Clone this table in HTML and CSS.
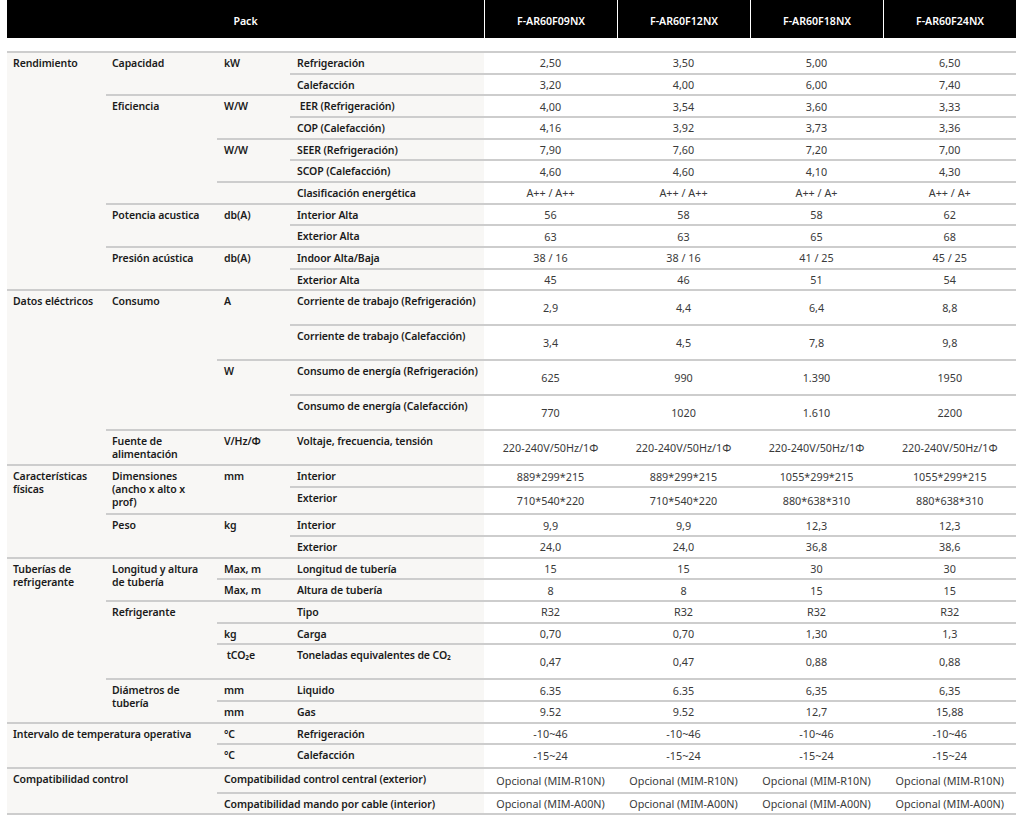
FILE: index.html
```html
<!DOCTYPE html>
<html lang="es">
<head>
<meta charset="utf-8">
<title>Especificaciones Pack</title>
<link rel="stylesheet" href="styles.css">
</head>
<body>
<div class="sheet">
  <table class="spec spec-head">
    <colgroup>
      <col class="c-g"><col class="c-s"><col class="c-u"><col class="c-l">
      <col class="c-d"><col class="c-d"><col class="c-d"><col class="c-d">
    </colgroup>
    <thead>
      <tr>
        <th colspan="4" class="pack">Pack</th>
        <th class="model">F-AR60F09NX</th>
        <th class="model">F-AR60F12NX</th>
        <th class="model">F-AR60F18NX</th>
        <th class="model">F-AR60F24NX</th>
      </tr>
    </thead>
  </table>

  <table class="spec spec-body">
    <colgroup>
      <col class="c-g"><col class="c-s"><col class="c-u"><col class="c-l">
      <col class="c-d"><col class="c-d"><col class="c-d"><col class="c-d">
    </colgroup>
    <tbody>
      <tr>
        <td class="g" rowspan="11">Rendimiento</td>
        <td class="s" rowspan="2">Capacidad</td>
        <td class="u" rowspan="2">kW</td>
        <td class="l">Refrigeración</td>
        <td class="d">2,50</td><td class="d">3,50</td><td class="d">5,00</td><td class="d">6,50</td>
      </tr>
      <tr>
        <td class="l">Calefacción</td>
        <td class="d">3,20</td><td class="d">4,00</td><td class="d">6,00</td><td class="d">7,40</td>
      </tr>
      <tr>
        <td class="s" rowspan="5">Eficiencia</td>
        <td class="u" rowspan="2">W/W</td>
        <td class="l">&nbsp;EER (Refrigeración)</td>
        <td class="d">4,00</td><td class="d">3,54</td><td class="d">3,60</td><td class="d">3,33</td>
      </tr>
      <tr>
        <td class="l">COP (Calefacción)</td>
        <td class="d">4,16</td><td class="d">3,92</td><td class="d">3,73</td><td class="d">3,36</td>
      </tr>
      <tr>
        <td class="u" rowspan="2">W/W</td>
        <td class="l">SEER (Refrigeración)</td>
        <td class="d">7,90</td><td class="d">7,60</td><td class="d">7,20</td><td class="d">7,00</td>
      </tr>
      <tr>
        <td class="l">SCOP (Calefacción)</td>
        <td class="d">4,60</td><td class="d">4,60</td><td class="d">4,10</td><td class="d">4,30</td>
      </tr>
      <tr>
        <td class="u"></td>
        <td class="l">Clasificación energética</td>
        <td class="d">A++ / A++</td><td class="d">A++ / A++</td><td class="d">A++ / A+</td><td class="d">A++ / A+</td>
      </tr>
      <tr>
        <td class="s" rowspan="2">Potencia acustica</td>
        <td class="u" rowspan="2">db(A)</td>
        <td class="l">Interior Alta</td>
        <td class="d">56</td><td class="d">58</td><td class="d">58</td><td class="d">62</td>
      </tr>
      <tr>
        <td class="l">Exterior Alta</td>
        <td class="d">63</td><td class="d">63</td><td class="d">65</td><td class="d">68</td>
      </tr>
      <tr>
        <td class="s" rowspan="2">Presión acústica</td>
        <td class="u" rowspan="2">db(A)</td>
        <td class="l">Indoor Alta/Baja</td>
        <td class="d">38 / 16</td><td class="d">38 / 16</td><td class="d">41 / 25</td><td class="d">45 / 25</td>
      </tr>
      <tr>
        <td class="l">Exterior Alta</td>
        <td class="d">45</td><td class="d">46</td><td class="d">51</td><td class="d">54</td>
      </tr>

      <tr class="tall">
        <td class="g" rowspan="5">Datos eléctricos</td>
        <td class="s" rowspan="4">Consumo</td>
        <td class="u" rowspan="2">A</td>
        <td class="l">Corriente de trabajo (Refrigeración)</td>
        <td class="d">2,9</td><td class="d">4,4</td><td class="d">6,4</td><td class="d">8,8</td>
      </tr>
      <tr class="tall">
        <td class="l">Corriente de trabajo (Calefacción)</td>
        <td class="d">3,4</td><td class="d">4,5</td><td class="d">7,8</td><td class="d">9,8</td>
      </tr>
      <tr class="tall">
        <td class="u" rowspan="2">W</td>
        <td class="l">Consumo de energía (Refrigeración)</td>
        <td class="d">625</td><td class="d">990</td><td class="d">1.390</td><td class="d">1950</td>
      </tr>
      <tr class="tall">
        <td class="l">Consumo de energía (Calefacción)</td>
        <td class="d">770</td><td class="d">1020</td><td class="d">1.610</td><td class="d">2200</td>
      </tr>
      <tr class="tall">
        <td class="s">Fuente de alimentación</td>
        <td class="u">V/Hz/Φ</td>
        <td class="l">Voltaje, frecuencia, tensión</td>
        <td class="d">220-240V/50Hz/1Φ</td><td class="d">220-240V/50Hz/1Φ</td><td class="d">220-240V/50Hz/1Φ</td><td class="d">220-240V/50Hz/1Φ</td>
      </tr>

      <tr class="mid">
        <td class="g" rowspan="4">Características físicas</td>
        <td class="s" rowspan="2">Dimensiones (ancho x alto x prof)</td>
        <td class="u" rowspan="2">mm</td>
        <td class="l">Interior</td>
        <td class="d">889*299*215</td><td class="d">889*299*215</td><td class="d">1055*299*215</td><td class="d">1055*299*215</td>
      </tr>
      <tr class="dim">
        <td class="l">Exterior</td>
        <td class="d">710*540*220</td><td class="d">710*540*220</td><td class="d">880*638*310</td><td class="d">880*638*310</td>
      </tr>
      <tr>
        <td class="s" rowspan="2">Peso</td>
        <td class="u" rowspan="2">kg</td>
        <td class="l">Interior</td>
        <td class="d">9,9</td><td class="d">9,9</td><td class="d">12,3</td><td class="d">12,3</td>
      </tr>
      <tr>
        <td class="l">Exterior</td>
        <td class="d">24,0</td><td class="d">24,0</td><td class="d">36,8</td><td class="d">38,6</td>
      </tr>

      <tr>
        <td class="g" rowspan="7">Tuberías de refrigerante</td>
        <td class="s" rowspan="2">Longitud y altura de tubería</td>
        <td class="u">Max, m</td>
        <td class="l">Longitud de tubería</td>
        <td class="d">15</td><td class="d">15</td><td class="d">30</td><td class="d">30</td>
      </tr>
      <tr>
        <td class="u">Max, m</td>
        <td class="l">Altura de tubería</td>
        <td class="d">8</td><td class="d">8</td><td class="d">15</td><td class="d">15</td>
      </tr>
      <tr>
        <td class="s" rowspan="3">Refrigerante</td>
        <td class="u"></td>
        <td class="l">Tipo</td>
        <td class="d">R32</td><td class="d">R32</td><td class="d">R32</td><td class="d">R32</td>
      </tr>
      <tr>
        <td class="u">kg</td>
        <td class="l">Carga</td>
        <td class="d">0,70</td><td class="d">0,70</td><td class="d">1,30</td><td class="d">1,3</td>
      </tr>
      <tr class="tall">
        <td class="u">&nbsp;tCO₂e</td>
        <td class="l">Toneladas equivalentes de CO₂</td>
        <td class="d">0,47</td><td class="d">0,47</td><td class="d">0,88</td><td class="d">0,88</td>
      </tr>
      <tr>
        <td class="s" rowspan="2">Diámetros de tubería</td>
        <td class="u">mm</td>
        <td class="l">Liquido</td>
        <td class="d">6.35</td><td class="d">6.35</td><td class="d">6,35</td><td class="d">6,35</td>
      </tr>
      <tr>
        <td class="u">mm</td>
        <td class="l">Gas</td>
        <td class="d">9.52</td><td class="d">9.52</td><td class="d">12,7</td><td class="d">15,88</td>
      </tr>

      <tr>
        <td class="g" colspan="2" rowspan="2">Intervalo de temperatura operativa</td>
        <td class="u">°C</td>
        <td class="l">Refrigeración</td>
        <td class="d">-10~46</td><td class="d">-10~46</td><td class="d">-10~46</td><td class="d">-10~46</td>
      </tr>
      <tr class="temp">
        <td class="u">°C</td>
        <td class="l">Calefacción</td>
        <td class="d">-15~24</td><td class="d">-15~24</td><td class="d">-15~24</td><td class="d">-15~24</td>
      </tr>

      <tr class="compat">
        <td class="g" colspan="2" rowspan="2">Compatibilidad control</td>
        <td class="u" colspan="2">Compatibilidad control central (exterior)</td>
        <td class="d">Opcional (MIM-R10N)</td><td class="d">Opcional (MIM-R10N)</td><td class="d">Opcional (MIM-R10N)</td><td class="d">Opcional (MIM-R10N)</td>
      </tr>
      <tr>
        <td class="u" colspan="2">Compatibilidad mando por cable (interior)</td>
        <td class="d">Opcional (MIM-A00N)</td><td class="d">Opcional (MIM-A00N)</td><td class="d">Opcional (MIM-A00N)</td><td class="d">Opcional (MIM-A00N)</td>
      </tr>
    </tbody>
  </table>
</div>
</body>
</html>
```

FILE: styles.css
```css
html, body {
  margin: 0;
  padding: 0;
  background: #ffffff;
}

body {
  overflow: hidden;
  font-family: "Noto Sans", "Open Sans", sans-serif;
  font-size: 11px;
  color: #1d1d1d;
}

.sheet {
  padding-left: 7px;
}

.spec {
  width: 1009px;
  table-layout: fixed;
}

.c-g { width: 99px; }
.c-s { width: 111px; }
.c-u { width: 73px; }
.c-l { width: 194px; }
.c-d { width: 133px; }

/* header band */
.spec-head {
  border-collapse: separate;
  border-spacing: 0;
}

.spec-head th {
  height: 38px;
  box-sizing: border-box;
  padding: 4px 4px 0;
  background: #000000;
  color: #ffffff;
  font-weight: 600;
  font-size: 10.6px;
  line-height: 14px;
  text-align: center;
  vertical-align: middle;
}

.spec-head th.model {
  border-left: 1px solid #ffffff;
}

/* body */
.spec-body {
  margin-top: 13px;
  border-collapse: collapse;
}

.spec-body tr {
  height: 21.67px;
}

.spec-body tr.tall { height: 35px; }
.spec-body tr.mid { height: 21.8px; }
.spec-body tr.dim { height: 27.3px; }
.spec-body tr.temp { height: 23.3px; }
.spec-body tr.compat { height: 25px; }

.spec-body td {
  border-top: 2px solid #cdcdcd;
  border-bottom: 2px solid #cdcdcd;
  line-height: 13px;
}

.g, .s, .u, .l {
  background: #f8f7f5;
  vertical-align: top;
  text-align: left;
  font-weight: 600;
  font-size: 10.5px;
  letter-spacing: -0.1px;
  color: #1b1b1b;
  padding: 4px 2px 0 6px;
}

.s {
  padding-right: 14px;
}

.u, .l {
  padding-left: 7px;
}

.d {
  background: #ffffff;
  text-align: center;
  vertical-align: middle;
  color: #3a3a3a;
  font-weight: 400;
  font-size: 10.8px;
  padding: 0 2px;
  border-left: 1px solid #ffffff;
}
```
